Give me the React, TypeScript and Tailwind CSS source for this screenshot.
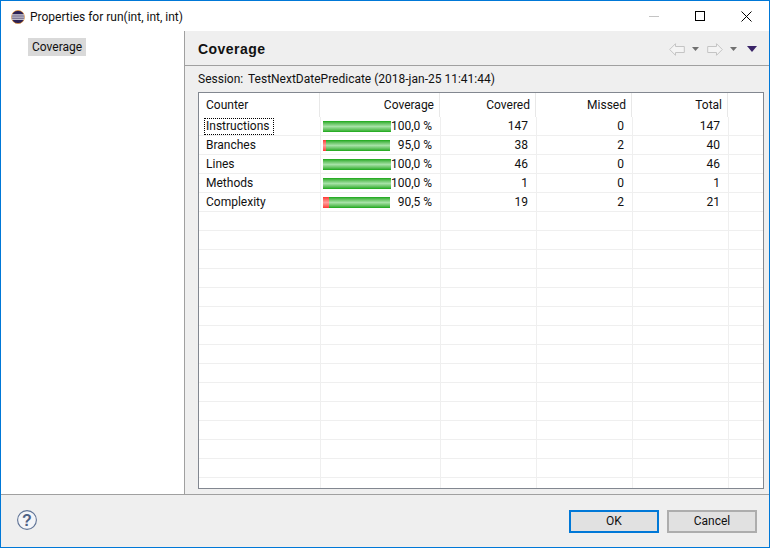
import React from "react";

const cols = ["w-[122px]", "w-[120px]", "w-[96px]", "w-[96px]", "w-[96px]", "flex-1"];

const data = [
  { name: "Instructions", pct: "100,0 %", red: 0, w: "w-[68px]", covered: "147", missed: "0", total: "147" },
  { name: "Branches", pct: "95,0 %", red: 3, w: "w-[67px]", covered: "38", missed: "2", total: "40" },
  { name: "Lines", pct: "100,0 %", red: 0, w: "w-[68px]", covered: "46", missed: "0", total: "46" },
  { name: "Methods", pct: "100,0 %", red: 0, w: "w-[68px]", covered: "1", missed: "0", total: "1" },
  { name: "Complexity", pct: "90,5 %", red: 6, w: "w-[67px]", covered: "19", missed: "2", total: "21" },
];

const empties = Array.from({ length: 15 }, (_, i) => i);

function Arrow({ flip }: { flip?: boolean }) {
  return (
    <svg width="16" height="13" viewBox="0 0 16 13" className={flip ? "-scale-x-100" : ""}>
      <path d="M0.7 6.5 L6.5 0.7 V3.5 H15.3 V9.5 H6.5 V12.3 Z" fill="#f4f4f4" stroke="#c4c4c4" strokeWidth="1" />
    </svg>
  );
}

function Tri({ c, w, h }: { c: string; w: number; h: number }) {
  return (
    <svg width={w} height={h} viewBox={`0 0 ${w} ${h}`} className="block">
      <path d={`M0 0 H${w} L${w / 2} ${h} Z`} fill={c} />
    </svg>
  );
}

function Bar({ red, w }: { red: number; w: string }) {
  return (
    <div className={`${w} h-[11px] flex shrink-0`}>
      <div className="h-full bg-gradient-to-b from-[#ff3030] via-[#ff9c9c] to-[#ff3030]" style={{ width: red }} />
      <div className="h-full flex-1 bg-gradient-to-b from-[#0aa80a] via-[#a6e2a6] to-[#0aa80a]" />
    </div>
  );
}

export default function App() {
  return (
    <div className="w-[770px] h-[548px] flex flex-col bg-white border border-[#0078d7] text-[12px] leading-[16px] text-[#111] font-['Roboto','Noto_Sans',sans-serif] overflow-hidden">
      {/* Title bar */}
      <div className="h-[30px] shrink-0 flex items-center pl-[10px]">
        <svg width="14" height="14" viewBox="0 0 14 14" className="mr-[5px] mt-[1px]">
          <circle cx="7" cy="7" r="6.6" fill="#2c2255" stroke="#f7941e" strokeWidth="0.6" />
          <rect x="0.5" y="4.4" width="13" height="1.1" fill="#fff" />
          <rect x="0.5" y="6.5" width="13" height="1.1" fill="#fff" />
          <rect x="0.5" y="8.6" width="13" height="1.1" fill="#fff" />
        </svg>
        <span className="mt-[1px]">Properties for run(int, int, int)</span>
        <div className="ml-auto flex items-center">
          <div className="w-[46px] flex justify-center"><div className="w-[10px] h-px bg-[#c4c4c4]" /></div>
          <div className="w-[46px] flex justify-center"><div className="w-[10px] h-[10px] border border-black" /></div>
          <div className="w-[46px] flex justify-center">
            <svg width="11" height="11" viewBox="0 0 11 11"><path d="M0.5 0.5 L10.5 10.5 M10.5 0.5 L0.5 10.5" stroke="#000" strokeWidth="1" /></svg>
          </div>
        </div>
      </div>

      {/* Body */}
      <div className="flex-1 min-h-0 flex border-b border-[#a0a0a0]">
        {/* Left tree */}
        <div className="w-[184px] shrink-0 border-r border-[#a0a0a0] pl-[27px] pt-[7px]">
          <div className="inline-block bg-[#d9d9d9] h-[18px] px-[4px] leading-[18px]">Coverage</div>
        </div>
        {/* Right */}
        <div className="flex-1 min-w-0 flex flex-col bg-[#efefef]">
          <div className="h-[35px] shrink-0 flex items-center pl-[13px] border-b border-[#a0a0a0]">
            <span className="font-bold text-[14px] tracking-[0.45px] mt-[2px] font-['Liberation_Sans',sans-serif]">Coverage</span>
            <div className="ml-auto flex items-center mr-[12px] mt-[2px]">
              <Arrow />
              <div className="ml-[7px]"><Tri c="#707070" w={7} h={4} /></div>
              <div className="ml-[8px]"><Arrow flip /></div>
              <div className="ml-[7px]"><Tri c="#707070" w={7} h={4} /></div>
              <div className="ml-[10px]"><Tri c="#3a2468" w={10} h={6} /></div>
            </div>
          </div>
          <div className="flex-1 min-h-0 flex flex-col pl-[13px] pr-[5px] pb-[5px]">
            <div className="h-[26px] shrink-0 flex items-center">
              <span className="w-[50px]">Session:</span>
              <span>TestNextDatePredicate (2018-jan-25 11:41:44)</span>
            </div>
            <div className="flex-1 min-h-0 border border-[#828790] bg-white overflow-hidden flex flex-col">
              {/* Header */}
              <div className="h-[24px] shrink-0 flex">
                <div className="w-[121px] shrink-0 border-r border-[#e8e8e8] pl-[7px] flex items-center">Counter</div>
                <div className="w-[120px] shrink-0 border-r border-[#e8e8e8] pr-[5px] flex items-center justify-end">Coverage</div>
                <div className="w-[96px] shrink-0 border-r border-[#e8e8e8] pr-[5px] flex items-center justify-end">Covered</div>
                <div className="w-[96px] shrink-0 border-r border-[#e8e8e8] pr-[5px] flex items-center justify-end">Missed</div>
                <div className="w-[96px] shrink-0 border-r border-[#e8e8e8] pr-[5px] flex items-center justify-end">Total</div>
              </div>
              {/* Rows */}
              {data.map((r, i) => (
                <div key={r.name} className="h-[19px] shrink-0 flex border-b border-[#efefef]">
                  <div className={`${cols[0]} shrink-0 pl-[5px] flex items-center border-r border-[#efefef]`}>
                    <span className={`pl-[2px] pr-[5px] h-[17px] leading-[17px] ${i === 0 ? "outline-1 outline-dotted outline-black -outline-offset-1" : ""}`}>
                      {r.name}
                    </span>
                  </div>
                  <div className={`${cols[1]} shrink-0 pl-[2px] pr-[8px] flex items-center justify-between whitespace-nowrap border-r border-[#efefef]`}>
                    <Bar red={r.red} w={r.w} />
                    <span>{r.pct}</span>
                  </div>
                  <div className={`${cols[2]} shrink-0 pr-[8px] flex items-center justify-end border-r border-[#efefef]`}>{r.covered}</div>
                  <div className={`${cols[3]} shrink-0 pr-[8px] flex items-center justify-end border-r border-[#efefef]`}>{r.missed}</div>
                  <div className={`${cols[4]} shrink-0 pr-[8px] flex items-center justify-end border-r border-[#efefef]`}>{r.total}</div>
                  <div className="flex-1" />
                </div>
              ))}
              {empties.map((i) => (
                <div key={i} className="h-[19px] shrink-0 flex border-b border-[#efefef]">
                  {cols.slice(0, 5).map((c, j) => (
                    <div key={j} className={`${c} shrink-0 border-r border-[#efefef]`} />
                  ))}
                </div>
              ))}
            </div>
          </div>
        </div>
      </div>

      {/* Footer */}
      <div className="h-[52px] shrink-0 bg-[#efefef] flex items-center pl-[16px] pr-[12px]">
        <svg width="20" height="20" viewBox="0 0 20 20" className="mb-[2px]">
          <circle cx="10" cy="10" r="9.4" fill="#f4f5f8" stroke="#5f7396" strokeWidth="1.1" />
          <text x="10" y="15.5" textAnchor="middle" fontSize="16" fontWeight="700" fill="#4d6185" fontFamily="Liberation Sans, sans-serif">?</text>
        </svg>
        <button className="ml-auto w-[90px] h-[23px] bg-[#e1e1e1] border-2 border-[#0078d7] flex items-center justify-center">OK</button>
        <button className="ml-[8px] w-[90px] h-[23px] bg-[#e1e1e1] border-2 border-[#adadad] flex items-center justify-center">Cancel</button>
      </div>
    </div>
  );
}
